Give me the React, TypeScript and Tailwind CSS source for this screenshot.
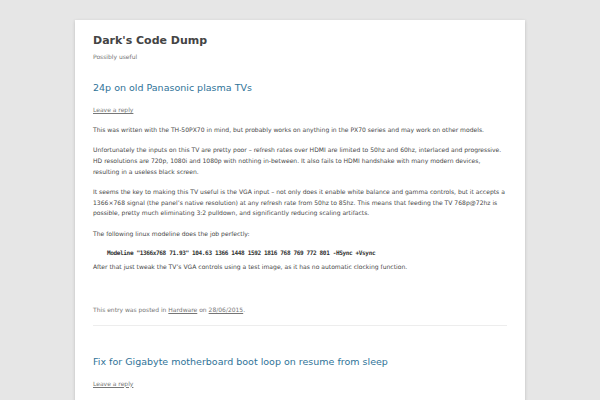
import React from "react";

type Post = {
  title: string;
};

const Paragraph = ({ children }: { children: React.ReactNode }) => (
  <p className="mb-[9.8px] text-[6.05px] leading-[10.6px] text-[#484848]">{children}</p>
);

const App = () => {
  const nextPost: Post = { title: "Fix for Gigabyte motherboard boot loop on resume from sleep" };

  return (
    <div
      className="h-[400px] overflow-hidden bg-[#e6e6e6]"
      style={{ fontFamily: '"DejaVu Sans", "Liberation Sans", sans-serif' }}
    >
      <div className="mx-auto mt-[20px] w-[450px] bg-white px-[18px] pt-[14px] pb-[40px] shadow-[0_1px_3px_rgba(100,100,100,0.3)]">
        {/* header */}
        <header>
          <h1 className="text-[11px] leading-[13px] font-bold text-[#444]">Dark's Code Dump</h1>
          <h2 className="mt-[3.5px] text-[6px] leading-[11px] text-[#757575]">Possibly useful</h2>
        </header>

        {/* first post */}
        <article className="mt-[20.5px]">
          <h1 className="text-[9.5px] leading-[12px] text-[#2f7398]">24p on old Panasonic plasma TVs</h1>
          <div className="mt-[10px] text-[6px] leading-[11px] text-[#777]">
            <span className="underline">Leave a reply</span>
          </div>
          <div className="mt-[10px]">
            <Paragraph>
              This was written with the TH-50PX70 in mind, but probably works on anything in the PX70 series and
              may work on other models.
            </Paragraph>
            <Paragraph>
              Unfortunately the inputs on this TV are pretty poor – refresh rates over HDMI are limited to 50hz and
              60hz, interlaced and progressive. HD resolutions are 720p, 1080i and 1080p with nothing in-between. It
              also fails to HDMI handshake with many modern devices, resulting in a useless black screen.
            </Paragraph>
            <Paragraph>
              It seems the key to making this TV useful is the VGA input – not only does it enable white balance and
              gamma controls, but it accepts a 1366×768 signal (the panel’s native resolution) at any refresh rate
              from 50hz to 85hz. This means that feeding the TV 768p@72hz is possible, pretty much eliminating 3:2
              pulldown, and significantly reducing scaling artifacts.
            </Paragraph>
            <p className="text-[6.05px] leading-[10.6px] text-[#484848]">The following linux modeline does the job perfectly:</p>
            <pre
              className="mt-[8.8px] mb-[3.4px] pl-[14px] text-[6.05px] leading-[10.6px] tracking-[-0.37px] font-semibold text-[#333]"
              style={{ fontFamily: '"DejaVu Sans Mono", "Liberation Mono", monospace' }}
            >
              Modeline "1366x768 71.93" 104.63 1366 1448 1592 1816 768 769 772 801 -HSync +Vsync
            </pre>
            <p className="text-[6.05px] leading-[10.6px] text-[#484848]">
              After that just tweak the TV’s VGA controls using a test image, as it has no automatic clocking function.
            </p>
          </div>
          <footer className="mt-[31px] text-[6px] leading-[11px] text-[#757575]">
            This entry was posted in <span className="underline">Hardware</span> on{" "}
            <span className="underline">28/06/2015</span>.
          </footer>
        </article>

        <hr className="mt-[10.5px] border-0 border-t border-[#ededed]" />

        {/* next post */}
        <article className="mt-[30px]">
          <h1 className="text-[9.5px] leading-[12px] text-[#2f7398]">{nextPost.title}</h1>
          <div className="mt-[9.5px] text-[6px] leading-[11px] text-[#777]">
            <span className="underline">Leave a reply</span>
          </div>
        </article>
      </div>
    </div>
  );
};

export default App;
